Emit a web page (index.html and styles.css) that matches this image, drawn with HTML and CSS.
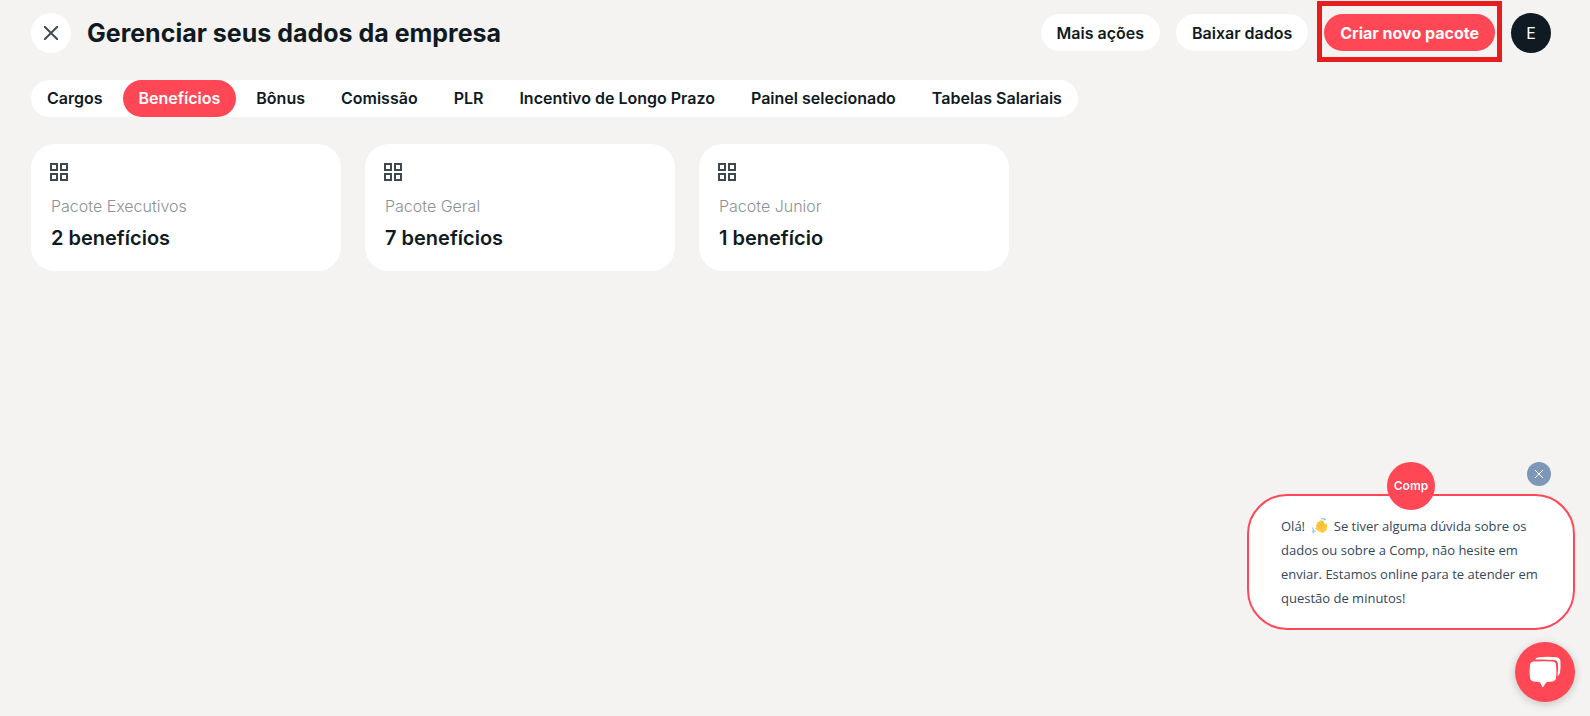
FILE: index.html
```html
<!DOCTYPE html>
<html lang="pt-BR">
<head>
  <meta charset="UTF-8">
  <meta name="viewport" content="width=device-width, initial-scale=1.0">
  <title>Gerenciar seus dados da empresa</title>
  <link rel="stylesheet" href="styles.css">
</head>
<body>

  <header class="topbar">
    <button type="button" class="close-page" aria-label="Fechar">
      <svg width="14" height="14" viewBox="0 0 14 14" fill="none" stroke="#414b53" stroke-width="2">
        <path d="M0 0l14 14M14 0L0 14"/>
      </svg>
    </button>
    <h1>Gerenciar seus dados da empresa</h1>
    <div class="actions">
      <button type="button" class="btn">Mais ações</button>
      <button type="button" class="btn">Baixar dados</button>
      <button type="button" class="btn btn-primary">Criar novo pacote</button>
      <button type="button" class="avatar">E</button>
    </div>
  </header>

  <main>
    <nav class="tabs">
      <a href="#">Cargos</a>
      <a href="#" class="active">Benefícios</a>
      <a href="#">Bônus</a>
      <a href="#">Comissão</a>
      <a href="#">PLR</a>
      <a href="#">Incentivo de Longo Prazo</a>
      <a href="#">Painel selecionado</a>
      <a href="#">Tabelas Salariais</a>
    </nav>

    <section class="cards">
      <article class="card">
        <svg class="grid-icon" width="20" height="18" viewBox="1 0 20 18" fill="none" stroke="#3d484f" stroke-width="2">
          <path d="M1 1h6v6H1zM11 1h6v6h-6zM1 11h6v6H1zM11 11h6v6h-6z"/>
        </svg>
        <p>Pacote Executivos</p>
        <h2>2 benefícios</h2>
      </article>
      <article class="card">
        <svg class="grid-icon" width="20" height="18" viewBox="1 0 20 18" fill="none" stroke="#3d484f" stroke-width="2">
          <path d="M1 1h6v6H1zM11 1h6v6h-6zM1 11h6v6H1zM11 11h6v6h-6z"/>
        </svg>
        <p>Pacote Geral</p>
        <h2>7 benefícios</h2>
      </article>
      <article class="card">
        <svg class="grid-icon" width="20" height="18" viewBox="1 0 20 18" fill="none" stroke="#3d484f" stroke-width="2">
          <path d="M1 1h6v6H1zM11 1h6v6h-6zM1 11h6v6H1zM11 11h6v6h-6z"/>
        </svg>
        <p>Pacote Junior</p>
        <h2>1 benefício</h2>
      </article>
    </section>
  </main>

  <!-- Chat widget -->
  <aside class="chat">
    <div class="bubble">
      <span class="chat-logo">Comp</span>
      <button type="button" class="chat-close" aria-label="Fechar mensagem">
        <svg width="8" height="8" viewBox="0 0 8 8" fill="none" stroke="#fff" stroke-width="1">
          <path d="M0 0l8 8M8 0L0 8"/>
        </svg>
      </button>
      <p>Olá!
        <svg class="wave" width="16" height="16" viewBox="0 0 16 16" aria-hidden="true">
          <path d="M4.600 9.500L3.800 7.200Q4 6 5 6.600L5.300 4.300Q6.200 3 7.100 4.200L7.800 2.600Q8.900 1.700 9.600 3L10.200 2.800Q11.300 2.200 11.700 3.600L13 7L13.400 5.800Q14.700 4.800 15 6.500Q15.600 11.500 13.200 13.600Q10.500 15.800 7.600 13.800L3.400 11.200Q2.600 9.800 4.600 9.500Z" fill="#ffc83d"/>
          <path d="M5.500 7.200l3.300 3.200M7.300 4.700l3 4M9.700 3.300l2.200 4.200" fill="none" stroke="#e8a21d" stroke-width=".7"/>
          <path d="M9 .8q2-.8 3.600 1.400M11.800.3q1.400.4 2 1.800M.6 9.500q.2 3.200 3 4.100M.3 12.600q.4 1.800 2 2.600" fill="none" stroke="#9dc8f5" stroke-width="1.300"/>
        </svg>
        Se tiver alguma dúvida sobre os dados ou sobre a Comp, não hesite em enviar. Estamos online para te atender em questão de minutos!</p>
    </div>
    <button type="button" class="chat-open" aria-label="Abrir chat">
      <svg width="32" height="32" viewBox="0 0 32 32" fill="#fff">
        <path d="M6 3.600Q7 1.300 9.500 1.200Q19 .4 27.500 1.200Q31 1.600 31.400 5Q31.900 11 31 16.500Q30.400 19.300 28.500 20Q29.700 13 28.900 7.500Q28.400 4.300 25 3.900Q16 3.200 6 3.600Z"/>
        <path d="M4.500 5.600Q14 4.700 23.500 5.600Q26.600 6 27 9Q27.800 15.500 27 22Q26.500 25 23.500 25.400L18 25.900Q16.800 26.300 14.200 31Q13.600 31.400 13 30.500Q11.500 26.300 10.200 25.900L4.500 25.400Q1.500 25 1 22Q.2 15.500 1 9Q1.500 6 4.500 5.600Z"/>
      </svg>
    </button>
  </aside>

</body>
</html>
```
FILE: styles.css
```css
* {
  box-sizing: border-box;
}

body {
  margin: 0;
  min-height: 100vh;
  background-color: #f4f3f1;
  color: #0f1a22;
  font-family: 'Inter', sans-serif;
}

button {
  padding: 0;
  border: none;
  font-family: inherit;
  cursor: pointer;
}

h1,
h2,
p {
  margin: 0;
}

/* Header */
.topbar {
  display: flex;
  align-items: center;
  gap: 16px;
  padding: 13px 39px 0 31px;
}

.close-page,
.avatar {
  display: flex;
  align-items: center;
  justify-content: center;
  width: 40px;
  height: 40px;
  border-radius: 50%;
  background-color: #fff;
}

.topbar h1 {
  font-size: 25px;
  line-height: 40px;
  font-weight: 650;
}

.actions {
  display: flex;
  align-items: center;
  gap: 16px;
  margin-left: auto;
}

.btn {
  height: 37px;
  margin-bottom: 1px;
  padding: 0 16px;
  border-radius: 19px;
  background-color: #fff;
  color: #0f1a22;
  font-size: 16px;
  font-weight: 600;
}

.btn-primary {
  position: relative;
  background-color: #ff4755;
  color: #fff;
  font-weight: 700;
}

/* Highlight frame */
.btn-primary::after {
  content: '';
  position: absolute;
  inset: -13px -7px -11px;
  border: 5px solid #e81c1c;
}

.avatar {
  background-color: #0f1a22;
  color: #fff;
  font-size: 16px;
}

/* Tabs */
main {
  padding: 27px 39px 0 31px;
}

.tabs {
  display: flex;
  gap: 4px;
  width: fit-content;
  border-radius: 19px;
  background-color: #fff;
}

.tabs a {
  padding: 0 16px;
  border-radius: 19px;
  color: #0f1a22;
  font-size: 16px;
  line-height: 37px;
  font-weight: 600;
  text-decoration: none;
}

.tabs .active {
  background-color: #ff4755;
  color: #fff;
}

/* Cards */
.cards {
  display: grid;
  grid-template-columns: repeat(auto-fill, 310px);
  gap: 24px;
  margin-top: 27px;
}

.card {
  padding: 19px 20px;
  border-radius: 24px;
  background-color: #fff;
}

.grid-icon {
  display: block;
  overflow: visible;
}

.card p {
  margin-top: 13px;
  color: #8c9195;
  font-size: 16px;
  line-height: 24px;
  font-weight: 300;
}

.card h2 {
  margin-top: 6px;
  font-size: 20px;
  line-height: 28px;
  font-weight: 600;
}

/* Chat */
.chat {
  position: fixed;
  right: 15px;
  bottom: 14px;
  display: flex;
  flex-direction: column;
  align-items: flex-end;
  gap: 12px;
}

.bubble {
  position: relative;
  width: 328px;
  padding: 18px 30px 18px 32px;
  border: 2px solid #ff4755;
  border-radius: 40px;
  background-color: #fff;
}

.bubble p {
  color: #33475b;
  font-family: 'Open Sans', sans-serif;
  font-size: 13px;
  line-height: 24px;
}

.wave {
  margin: 0 2px 0 4px;
  vertical-align: -3px;
}

.chat-logo {
  position: absolute;
  top: -34px;
  left: 138px;
  width: 48px;
  height: 48px;
  border-radius: 50%;
  background-color: #ff4755;
  color: #fff;
  font-size: 12px;
  line-height: 48px;
  font-weight: 600;
  text-align: center;
}

.chat-close {
  position: absolute;
  top: -34px;
  right: 22px;
  display: flex;
  align-items: center;
  justify-content: center;
  width: 24px;
  height: 24px;
  border-radius: 50%;
  background-color: #7c98b6;
}

.chat-open {
  display: flex;
  align-items: center;
  justify-content: center;
  width: 60px;
  height: 60px;
  border-radius: 50%;
  background-color: #ff4755;
  box-shadow: 0 2px 8px rgba(0, 0, 0, 0.2);
}
```
